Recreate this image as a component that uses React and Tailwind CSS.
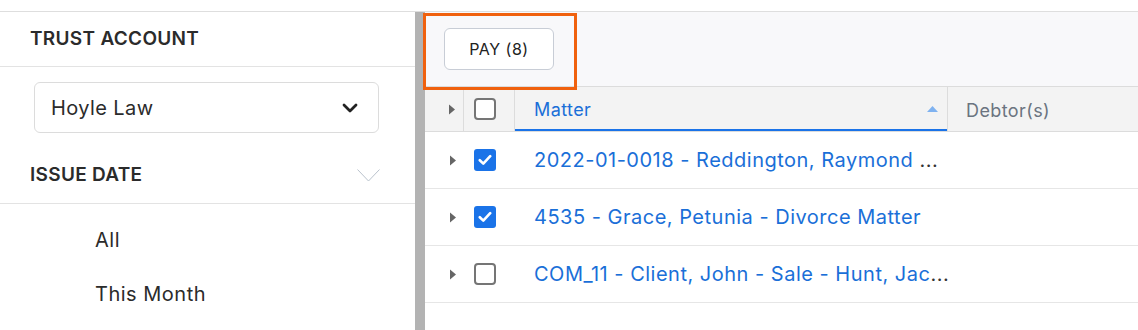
import React from "react";

const Tri = () => (
  <svg width="8" height="11" viewBox="0 0 8 11"><path d="M1 0.5 L7 5.5 L1 10.5 Z" fill="#666" /></svg>
);

const Check = ({ checked }) =>
  checked ? (
    <div className="w-[22px] h-[22px] rounded-[3px] bg-[#1a73e8] flex items-center justify-center">
      <svg width="14" height="12" viewBox="0 0 14 12"><path d="M1.8 6.2 L5.3 9.6 L12.2 2.2" stroke="white" strokeWidth="2.6" fill="none" strokeLinecap="round" strokeLinejoin="round" /></svg>
    </div>
  ) : (
    <div className="w-[22px] h-[22px] rounded-[4px] border-2 border-[#757575] bg-white" />
  );

const rows = [
  { checked: true, text: "2022-01-0018 - Reddington, Raymond ", tail: "..." },
  { checked: true, text: "4535 - Grace, Petunia - Divorce Matter", tail: "" },
  { checked: false, text: "COM_11 - Client, John - Sale - Hunt, Jac", tail: "..." },
];

export default function App() {
  return (
    <div className="w-[1138px] h-[330px] bg-white overflow-hidden flex flex-col" style={{ fontFamily: "Inter, 'Noto Sans', sans-serif" }}>
      <div className="h-[12px] border-b border-[#dedede] shrink-0" />
      <div className="flex flex-1 min-h-0">
        {/* Left panel */}
        <div className="w-[415px] shrink-0 flex flex-col">
          <div className="h-[55px] border-b border-[#e3e3e3] flex items-center pl-[30px] text-[19px] font-semibold text-[#2b2b2b] tracking-[0.3px]">
            TRUST ACCOUNT
          </div>
          <div className="pt-[15px] pl-[34px] pr-[36px]">
            <div className="h-[51px] border border-[#dcdcdc] rounded-[6px] flex items-center justify-between pl-[16px] pr-[20px]">
              <span className="text-[20px] text-[#2b2b2b] tracking-[0.4px]">Hoyle Law</span>
              <svg width="16" height="10" viewBox="0 0 16 10"><path d="M2 2 L8 8 L14 2" stroke="#222" strokeWidth="2.8" fill="none" strokeLinecap="round" strokeLinejoin="round" /></svg>
            </div>
          </div>
          <div className="mt-[14px] h-[57px] border-b border-[#e3e3e3] flex items-center justify-between pl-[30px] pr-[35px]">
            <span className="text-[19px] font-semibold text-[#2b2b2b] tracking-[0.3px]">ISSUE DATE</span>
            <svg width="23" height="13" viewBox="0 0 23 13"><path d="M0.5 0.5 L11.5 12 L22.5 0.5" stroke="#b9c2cc" strokeWidth="1" fill="none" /></svg>
          </div>
          <div className="pt-[9px] pl-[95px] text-[20px] text-[#2b2b2b] tracking-[0.5px]">
            <div className="h-[54px] flex items-center">All</div>
            <div className="h-[54px] flex items-center">This Month</div>
          </div>
        </div>
        {/* Divider */}
        <div className="w-[10px] shrink-0 bg-[#b3b3b3]" />
        {/* Right panel */}
        <div className="flex-1 flex flex-col relative">
          <div className="h-[75px] shrink-0 bg-[#f8f8fa] border-b border-[#dcdcdc] pl-[19px] pt-[16px]">
            <button className="w-[110px] h-[42px] bg-white border border-[#c8cdd6] rounded-[6px] text-[16px] text-[#222] tracking-[0.5px]">
              PAY (8)
            </button>
          </div>
          <div className="absolute left-[-2px] top-[1px] w-[154px] h-[77px] border-[3px] border-[#f0610e]" />
          {/* Header row */}
          <div className="h-[45px] shrink-0 bg-[#f3f3f3] border-b border-[#dcdcdc] flex text-[18px] tracking-[0.4px]">
            <div className="w-[39px] border-r border-[#dcdcdc] flex items-center justify-end pr-[7px]"><Tri /></div>
            <div className="w-[51px] border-r border-[#dcdcdc] flex items-center pl-[10px]"><Check checked={false} /></div>
            <div className="w-[432px] border-b-2 border-[#1a73e8] flex items-center justify-between pl-[19px] pr-[9px] pt-[2px] text-[#1a6fd8]">
              <span>Matter</span>
              <svg width="11" height="6" viewBox="0 0 11 6"><path d="M0 6 L5.5 0 L11 6 Z" fill="#7fb2f0" /></svg>
            </div>
            <div className="border-l border-[#dcdcdc] flex-1 flex items-center pl-[18px] pt-[2px] text-[#6b7480]">Debtor(s)</div>
          </div>
          {rows.map((r, i) => (
            <div key={i} className="h-[57px] shrink-0 border-b border-[#e6e6e6] flex text-[20px] tracking-[0.5px]">
              <div className="w-[39px] flex items-center justify-end pr-[7px]"><Tri /></div>
              <div className="w-[51px] flex items-center pl-[10px]"><Check checked={r.checked} /></div>
              <div className="flex-1 flex items-center pl-[19px] whitespace-pre">
                <span>
                  <span className="text-[#1a6fd8]">{r.text}</span>
                  <span className="text-[#333]">{r.tail}</span>
                </span>
              </div>
            </div>
          ))}
        </div>
      </div>
    </div>
  );
}
